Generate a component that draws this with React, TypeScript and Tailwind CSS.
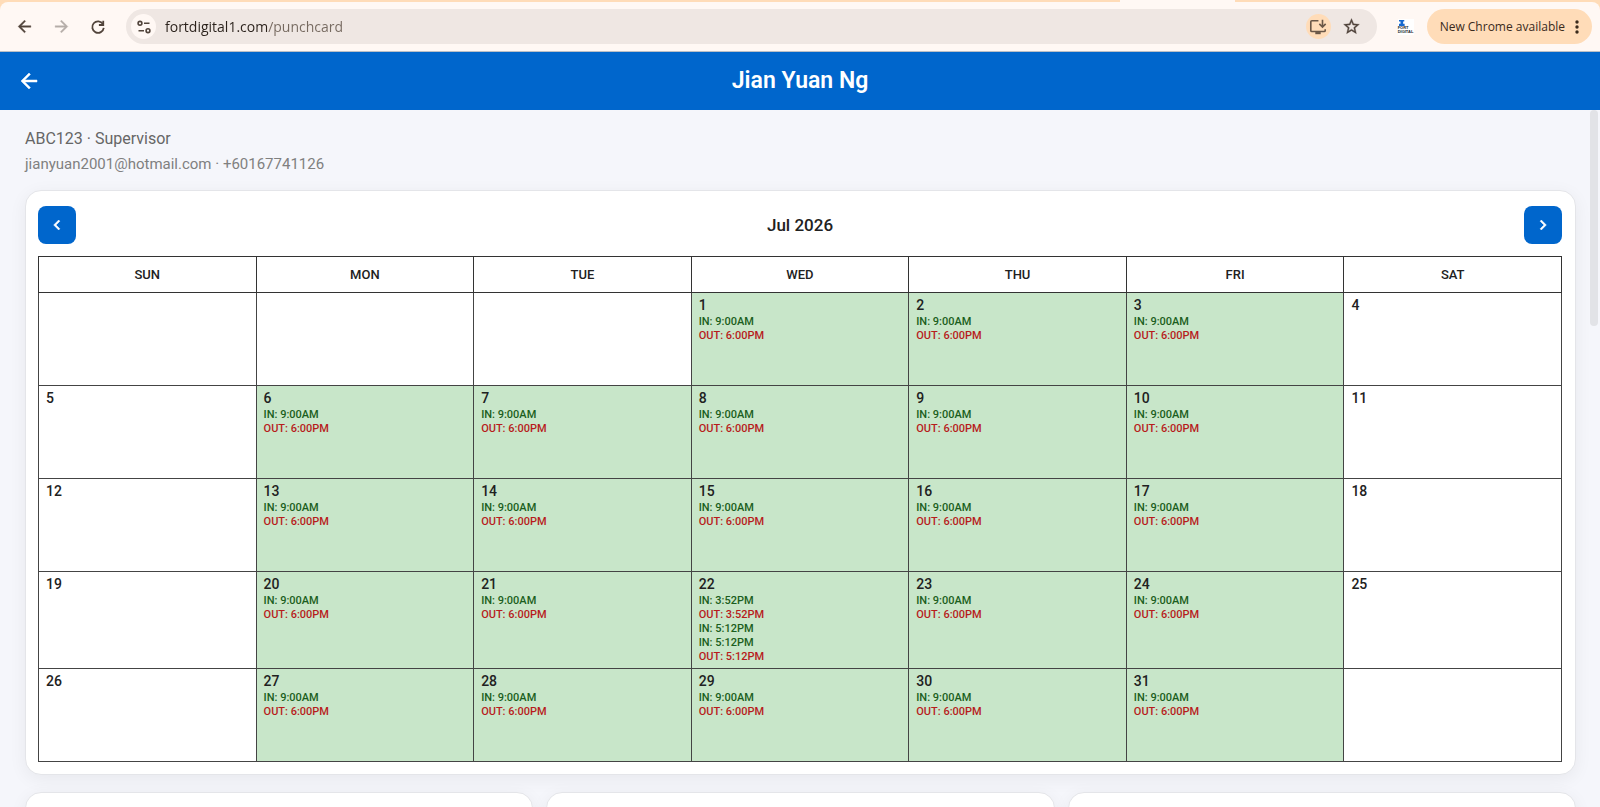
import React from "react";

type Punch = { kind: "IN" | "OUT"; time: string };

const weekdays = ["SUN", "MON", "TUE", "WED", "THU", "FRI", "SAT"];

const regularDay: Punch[] = [
  { kind: "IN", time: "9:00AM" },
  { kind: "OUT", time: "6:00PM" },
];

const overrides: Record<number, Punch[]> = {
  22: [
    { kind: "IN", time: "3:52PM" },
    { kind: "OUT", time: "3:52PM" },
    { kind: "IN", time: "5:12PM" },
    { kind: "IN", time: "5:12PM" },
    { kind: "OUT", time: "5:12PM" },
  ],
};

const firstWeekday = 3;
const daysInMonth = 31;

const weeks: (number | null)[][] = Array.from({ length: 5 }, (_, w) =>
  Array.from({ length: 7 }, (_, d) => {
    const day = w * 7 + d - firstWeekday + 1;
    return day >= 1 && day <= daysInMonth ? day : null;
  }),
);

function BackArrow({ className }: { className: string }) {
  return (
    <svg viewBox="0 0 24 24" fill="currentColor" stroke="currentColor" strokeWidth="0.5" className={className} aria-hidden="true">
      <path d="M20 11H7.83l5.59-5.59L12 4l-8 8 8 8 1.41-1.41L7.83 13H20v-2z" />
    </svg>
  );
}

function BrowserBar() {
  return (
    <div className="border-b border-[#b9bfc6] bg-[#ffdcb8] font-['Open_Sans',sans-serif]">
      <div className="flex h-[2px] justify-end">
        <div className="mr-[365px] w-[115px] bg-[#fff8f4]" />
      </div>
      <div className="flex h-[49px] items-center rounded-t-lg bg-[#fff8f4] pr-2 pl-3">
        <div className="flex items-center gap-[13px] text-[#51443b]">
          <button aria-label="Back" className="flex size-6 items-center justify-center">
            <BackArrow className="size-[19px]" />
          </button>
          <button aria-label="Forward" className="flex size-6 items-center justify-center text-[#b5ada8]">
            <BackArrow className="size-[19px] rotate-180" />
          </button>
          <button aria-label="Reload" className="flex size-6 items-center justify-center">
            <svg viewBox="0 0 24 24" fill="none" stroke="currentColor" strokeWidth="2.4" className="size-[18px]" aria-hidden="true">
              <path d="M18.6 8A7.7 7.7 0 1 0 19.7 13.2" />
              <path d="M19 3.5V9.3H13.2" />
            </svg>
          </button>
        </div>
        <div className="ml-4 flex h-[35px] min-w-0 flex-1 items-center rounded-full bg-[#efe7e3] pr-[13px] pl-[5px]">
          <button aria-label="View site information" className="flex size-[25px] shrink-0 items-center justify-center rounded-full bg-[#fff8f4] text-[#51443b]">
            <svg viewBox="0 0 16 16" fill="none" stroke="currentColor" strokeWidth="1.6" className="size-4" aria-hidden="true">
              <circle cx="4" cy="4.3" r="1.9" />
              <path d="M8 4.3h5.500M2.500 11.700h5.500" />
              <circle cx="12" cy="11.7" r="1.9" />
            </svg>
          </button>
          <input
            aria-label="Address"
            type="text"
            defaultValue="fortdigital1.com/punchcard"
            className="ml-[9px] h-6 min-w-0 flex-1 bg-linear-to-r from-[#2a211b] from-[102px] to-[#75695f] to-[102px] bg-clip-text text-[14px] text-transparent outline-none"
          />
          <button aria-label="Install app" className="flex size-[25px] shrink-0 items-center justify-center rounded-full bg-[#ffdcb8] text-[#6a5747]">
            <svg viewBox="0 0 20 20" fill="none" stroke="currentColor" strokeWidth="1.8" className="size-[18px]" aria-hidden="true">
              <path d="M10.500 3H3.200Q2 3 2 4.200V13.800Q2 15 3.200 15H16.800Q18 15 18 13.800V12.500" />
              <path d="M15 2V9.500M11.500 6.500L15 10L18.500 6.500" />
              <path d="M7 16.800H13" strokeWidth="2.400" />
            </svg>
          </button>
          <button aria-label="Bookmark this page" className="ml-[9px] flex size-6 shrink-0 items-center justify-center text-[#51443b]">
            <svg viewBox="0 0 24 24" fill="currentColor" stroke="currentColor" strokeWidth="0.400" className="size-[19px]" aria-hidden="true">
              <path d="M22 9.240l-7.190-.62L12 2 9.190 8.630 2 9.240l5.460 4.730L5.820 21 12 17.270 18.180 21l-1.630-7.030L22 9.240zM12 15.400l-3.760 2.270 1-4.280-3.320-2.880 4.380-.38L12 6.100l1.710 4.040 4.380.38-3.320 2.880 1 4.280L12 15.400z" />
            </svg>
          </button>
        </div>
        <button aria-label="Fort Digital" className="mr-[13px] ml-[21px] flex size-4 shrink-0 flex-col items-start justify-center bg-white text-left font-['Liberation_Sans',sans-serif] text-[4px] leading-[4px] font-black text-[#25282c]">
          <svg viewBox="0 0 16 8" className="ml-px h-[6px] w-3" aria-hidden="true">
            <path d="M0 0H7V2H5.500V5H7.500V8H0V5H2V2H0Z" fill="#1668cf" />
          </svg>
          <span>FORT</span>
          <span>DIGITAL</span>
        </button>
        <button className="flex h-[35px] shrink-0 items-center gap-[6px] rounded-full bg-[#ffdcb8] pr-[9px] pl-[13px] text-[12px] whitespace-nowrap text-[#3a2a1c]">
          New Chrome available
          <svg viewBox="0 0 12 16" fill="currentColor" className="h-4 w-3" aria-hidden="true">
            <circle cx="6" cy="3" r="1.700" />
            <circle cx="6" cy="8" r="1.700" />
            <circle cx="6" cy="13" r="1.700" />
          </svg>
        </button>
      </div>
    </div>
  );
}

function MonthButton({ label, d }: { label: string; d: string }) {
  return (
    <button aria-label={label} className="flex size-[38px] items-center justify-center rounded-lg bg-[#0066cc] text-white">
      <svg viewBox="0 0 24 24" fill="currentColor" className="size-5" aria-hidden="true">
        <path d={d} stroke="currentColor" strokeWidth="0.600" />
      </svg>
    </button>
  );
}

function DayCell({ day, weekend }: { day: number | null; weekend: boolean }) {
  const punches = day === null || weekend ? [] : (overrides[day] ?? regularDay);
  return (
    <td className={`border border-[#444444] px-[7px] pt-[3px] pb-1 align-top ${punches.length ? "bg-[#c8e6c9]" : "bg-white"}`}>
      {day !== null && <div className="text-[14px] leading-[19px] font-medium text-[#212121]">{day}</div>}
      {punches.map((p, i) => (
        <div key={i} className={`text-[11px] leading-[14px] font-medium ${p.kind === "IN" ? "text-[#1b5e20]" : "text-[#b71c1c]"}`}>
          {p.kind}: {p.time}
        </div>
      ))}
    </td>
  );
}

export default function App() {
  return (
    <div className="flex h-screen flex-col overflow-hidden bg-[#f5f6fb] font-['Roboto',sans-serif]">
      <BrowserBar />
      <header className="grid h-[58px] shrink-0 grid-cols-[1fr_auto_1fr] items-center bg-[#0066cc] px-[17px] text-white">
        <button aria-label="Go back" className="size-6">
          <BackArrow className="size-6" />
        </button>
        <h1 className="text-[23px] leading-7 font-semibold">Jian Yuan Ng</h1>
      </header>
      <div className="flex min-h-0 flex-1">
        <main className="min-w-0 flex-1 overflow-hidden pt-[18px] pr-[14px] pl-[25px]">
          <p className="text-[16px] leading-[22px] text-[#666666]">ABC123 · Supervisor</p>
          <p className="mt-[3px] text-[15px] leading-[22px] text-[#808080]">jianyuan2001@hotmail.com · +60167741126</p>
          <section className="mt-[15px] rounded-2xl border border-[#e4e5e9] bg-white pt-[15px] pr-[13px] pb-3 pl-3 shadow-[0_4px_18px_rgba(0,0,0,0.06)]">
            <div className="flex items-center justify-between">
              <MonthButton label="Previous month" d="M15.410 7.410L14 6l-6 6 6 6 1.410-1.410L10.830 12z" />
              <h2 className="text-[17px] leading-6 font-medium text-[#212121]">Jul 2026</h2>
              <MonthButton label="Next month" d="M10 6L8.590 7.410 13.170 12l-4.580 4.590L10 18l6-6z" />
            </div>
            <table className="mt-3 w-full table-fixed border-collapse">
              <thead>
                <tr className="h-9">
                  {weekdays.map((d) => (
                    <th key={d} scope="col" className="border border-[#333333] p-0 text-[13px] leading-4 font-medium text-[#212121]">
                      {d}
                    </th>
                  ))}
                </tr>
              </thead>
              <tbody>
                {weeks.map((week, w) => (
                  <tr key={w} className="h-[93px]">
                    {week.map((day, d) => (
                      <DayCell key={d} day={day} weekend={d === 0 || d === 6} />
                    ))}
                  </tr>
                ))}
              </tbody>
            </table>
          </section>
          <div className="mt-[17px] grid grid-cols-3 gap-[13px]">
            {[0, 1, 2].map((i) => (
              <section key={i} className="h-40 rounded-2xl border border-[#e4e5e9] bg-white shadow-[0_4px_18px_rgba(0,0,0,0.06)]" />
            ))}
          </div>
        </main>
        <div className="w-[10px] shrink-0">
          <div className="h-[216px] w-2 rounded-full bg-[#e2e3e7]" />
        </div>
      </div>
    </div>
  );
}
